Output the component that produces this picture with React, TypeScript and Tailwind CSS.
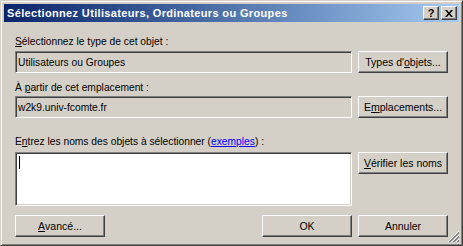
// Boîte de dialogue Windows classique : sélection d'utilisateurs, ordinateurs ou groupes.
import type { ReactNode } from 'react';

const relief =
  'border border-t-white border-l-white border-r-[#404040] border-b-[#404040] bg-[#d4d0c8] shadow-[inset_-1px_-1px_#808080]';
const creux =
  'border border-t-[#808080] border-l-[#808080] border-r-white border-b-white shadow-[inset_1px_1px_#404040,inset_-1px_-1px_#d4d0c8]';

function Bouton({ children, className = '' }: { children: ReactNode; className?: string }) {
  return (
    <button
      type="button"
      className={`${relief} flex h-[22px] w-[90px] shrink-0 items-center justify-center text-[10.5px] leading-none text-black ${className}`}
    >
      {children}
    </button>
  );
}

function BoutonTitre({ children }: { children: ReactNode }) {
  return (
    <span
      className={`${relief} flex h-[14px] w-[16px] items-center justify-center text-[11px] font-bold leading-none text-black`}
    >
      {children}
    </span>
  );
}

function Poignee() {
  return (
    <svg className="absolute bottom-0 right-0" width="12" height="12" viewBox="0 0 12 12" aria-hidden>
      {[0, 4, 8].map((d) => (
        <g key={d}>
          <line x1={d + 1} y1="12" x2="12" y2={d + 1} stroke="#ffffff" strokeWidth="1" />
          <line x1={d + 2} y1="12" x2="12" y2={d + 2} stroke="#808080" strokeWidth="1" />
          <line x1={d + 3} y1="12" x2="12" y2={d + 3} stroke="#808080" strokeWidth="1" />
        </g>
      ))}
    </svg>
  );
}

export default function App() {
  return (
    <div className="h-[246px] w-[463px] font-['Liberation_Sans',Arial,sans-serif]">
      <div className="flex h-full w-full flex-col border border-t-[#d4d0c8] border-l-[#d4d0c8] border-r-[#404040] border-b-[#404040] bg-[#d4d0c8] p-[3px] shadow-[inset_1px_1px_#ffffff,inset_-1px_-1px_#808080]">
        <div className="flex h-[18px] shrink-0 items-center bg-gradient-to-r from-[#0a246a] to-[#a6caf0] pl-[3px] pr-[2px]">
          <span className="flex-1 truncate text-[11px] font-bold leading-none tracking-[0.35px] text-white">
            Sélectionnez Utilisateurs, Ordinateurs ou Groupes
          </span>
          <div className="flex gap-[2px]">
            <BoutonTitre>?</BoutonTitre>
            <BoutonTitre>
              <svg width="8" height="7" viewBox="0 0 8 7" aria-hidden>
                <path d="M0 0h2l2 2.5L6 0h2L5 3.5 8 7H6L4 4.5 2 7H0l3-3.5z" fill="#000" />
              </svg>
            </BoutonTitre>
          </div>
        </div>

        <div className="relative flex flex-1 flex-col px-[11px] pt-[13px] text-[10.25px] leading-[13px] text-black">
          <p>
            <u>S</u>électionnez le type de cet objet :
          </p>
          <div className="mt-[3px] flex gap-[6px]">
            <div className={`${creux} flex h-[22px] w-[337px] items-center bg-[#d4d0c8] pl-[2px]`}>
              Utilisateurs ou Groupes
            </div>
            <Bouton>
              Types d'<u>o</u>bjets...
            </Bouton>
          </div>

          <p className="mt-[8px]">
            À <u>p</u>artir de cet emplacement :
          </p>
          <div className="mt-[2px] flex gap-[6px]">
            <div className={`${creux} flex h-[22px] w-[337px] items-center bg-[#d4d0c8] pl-[2px]`}>
              w2k9.univ-fcomte.fr
            </div>
            <Bouton>
              E<u>m</u>placements...
            </Bouton>
          </div>

          <p className="mt-[17px]">
            E<u>n</u>trez les noms des objets à sélectionner (
            <span className="text-[#0000ff] underline">exemples</span>) :
          </p>
          <div className="mt-[4px] flex items-start gap-[6px]">
            <div className={`${creux} h-[54px] w-[337px] bg-white pl-[3px] pt-[3px]`}>
              <span className="block h-[13px] w-px bg-black" />
            </div>
            <Bouton>
              <u>V</u>érifier les noms
            </Bouton>
          </div>

          <div className="mt-[9px] flex gap-[6px]">
            <Bouton>
              <u>A</u>vancé...
            </Bouton>
            <div className="flex-1" />
            <Bouton>OK</Bouton>
            <Bouton>Annuler</Bouton>
          </div>
          <Poignee />
        </div>
      </div>
    </div>
  );
}
